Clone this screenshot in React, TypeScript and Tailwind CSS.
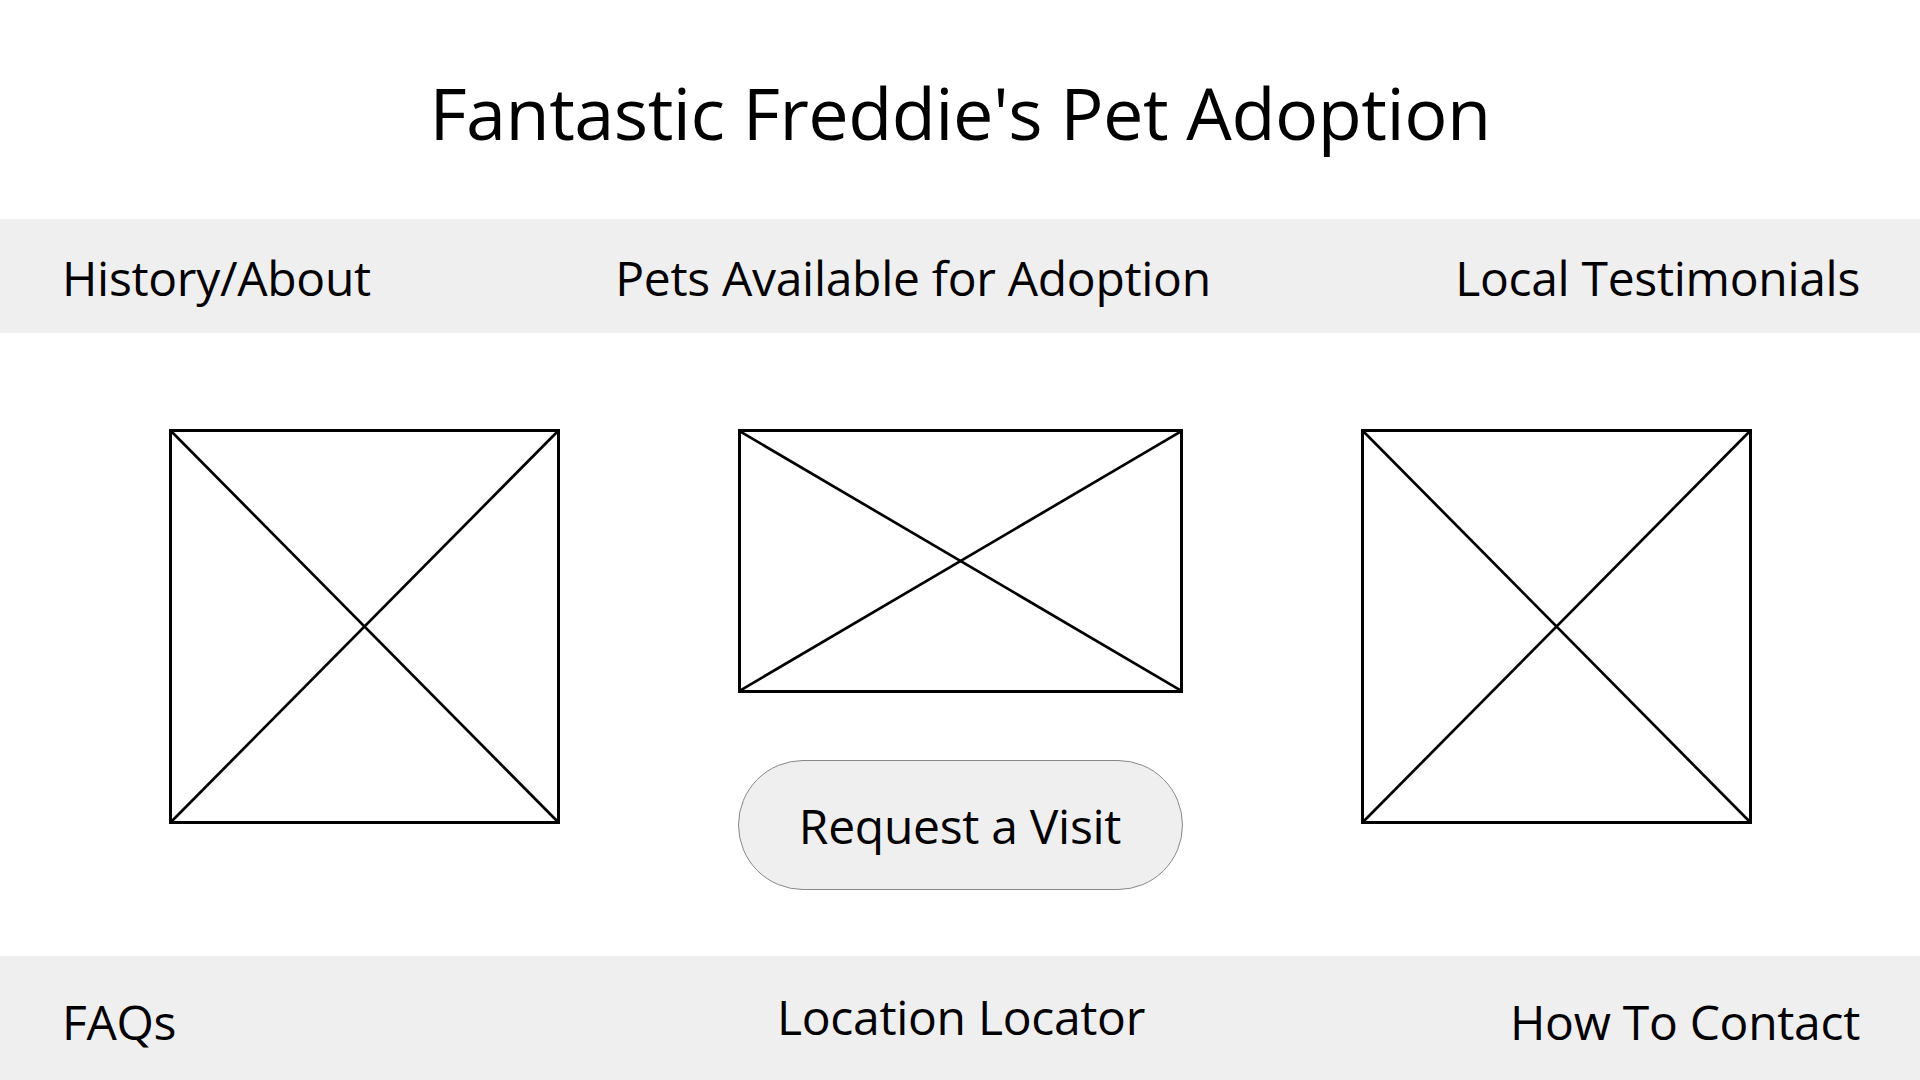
import React from "react";

function Placeholder({ w, h }: { w: string; h: string }) {
    return (
        <div className={`${w} ${h} border-[3px] border-black relative`}>
            <svg className="absolute inset-0 w-full h-full" viewBox="0 0 100 100" preserveAspectRatio="none">
                <line x1="0" y1="0" x2="100" y2="100" stroke="black" strokeWidth="2.7" vectorEffect="non-scaling-stroke" />
                <line x1="100" y1="0" x2="0" y2="100" stroke="black" strokeWidth="2.7" vectorEffect="non-scaling-stroke" />
            </svg>
        </div>
    );
}

export default function App() {
    return (
        <div className="w-[1920px] h-[1080px] bg-white text-black flex flex-col overflow-hidden" style={{ fontFamily: '"Open Sans", "Noto Sans", sans-serif' }}>
            <header className="h-[219px] flex items-center justify-center pt-[4px]">
                <h1 className="text-[72px] leading-none tracking-[-0.5px]">Fantastic Freddie's Pet Adoption</h1>
            </header>

            <nav className="h-[114px] bg-[#efefef] flex items-center justify-between pl-[62px] pr-[60px] pt-[4px] text-[48px] tracking-[-0.3px]">
                <span>History/About</span>
                <span>Pets Available for Adoption</span>
                <span>Local Testimonials</span>
            </nav>

            <main className="flex-1 flex justify-center gap-[178px] pt-[96px]">
                <Placeholder w="w-[391px]" h="h-[395px]" />
                <div className="flex flex-col items-center gap-[67px]">
                    <Placeholder w="w-[445px]" h="h-[264px]" />
                    <button className="w-[445px] h-[130px] rounded-full bg-[#efefef] border border-[#888888] text-[48px] tracking-[-0.3px] pt-[2px]">
                        Request a Visit
                    </button>
                </div>
                <Placeholder w="w-[391px]" h="h-[395px]" />
            </main>

            <footer className="h-[124px] bg-[#efefef] grid grid-cols-3 items-center pl-[62px] pr-[60px] text-[48px] tracking-[-0.3px]">
                <span className="justify-self-start mt-[8px]">FAQs</span>
                <span className="justify-self-center mb-[2px]">Location Locator</span>
                <span className="justify-self-end mt-[8px]">How To Contact</span>
            </footer>
        </div>
    );
}
